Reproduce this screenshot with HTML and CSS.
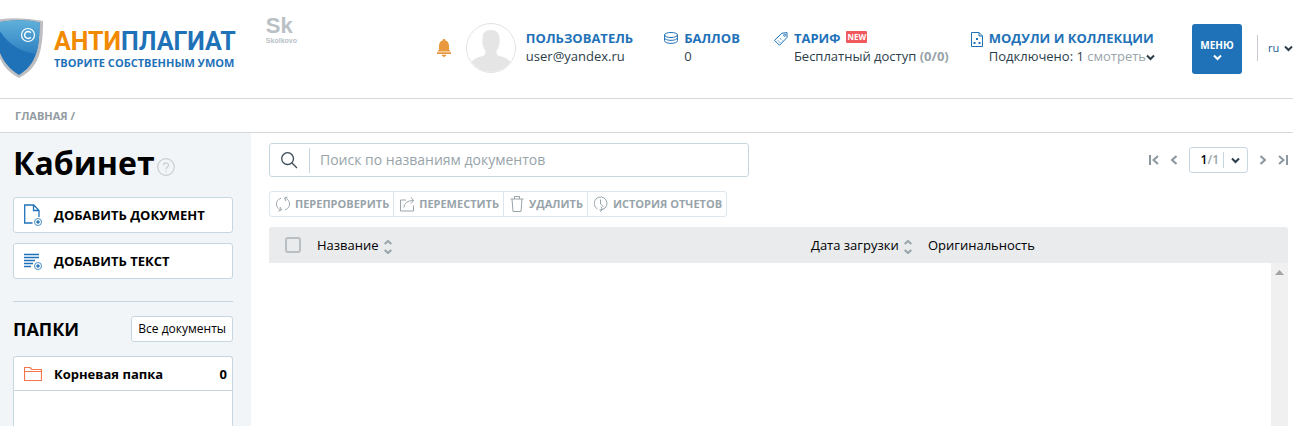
FILE: index.html
```html
<!DOCTYPE html>
<html lang="ru">
<head>
<meta charset="utf-8">
<meta name="viewport" content="width=device-width, initial-scale=1">
<title>Антиплагиат — Кабинет</title>
<link rel="stylesheet" href="styles.css">
</head>
<body>
<header class="header">
  <a class="logo" href="#">
    <svg class="logo-shield" width="44" height="62" viewBox="0 0 44 62" aria-hidden="true">
      <defs>
        <linearGradient id="shine" x1="0" y1="0" x2="0" y2="1"><stop offset="0" stop-color="#66b5de"/><stop offset="1" stop-color="#2b7fc0"/></linearGradient>
        <clipPath id="shield"><path d="M-5 6Q19 1 39.500 5.500C39.500 30 37 47 19 58C4 49-5 34-5 6z"/></clipPath>
      </defs>
      <path d="M-6 3Q19-1 43 4C43 33 39 51 19 61C2 52-6 38-6 3z" fill="#bcbec1"/>
      <path d="M-5 6Q19 1 39.500 5.500C39.500 30 37 47 19 58C4 49-5 34-5 6z" fill="#1f72b8"/>
      <path d="M-5 0H44V38Q14 37-1 13z" fill="url(#shine)" clip-path="url(#shield)"/>
      <circle cx="28" cy="18" r="6.500" fill="none" stroke="#fff" stroke-width="1.200"/>
      <path d="M30.800 15.800a3.500 3.500 0 1 0 0 4.400" fill="none" stroke="#fff" stroke-width="1.400"/>
    </svg>
    <span class="logo-text">
      <span class="logo-name"><span class="logo-accent">АНТИ</span>ПЛАГИАТ</span>
      <span class="logo-tagline">ТВОРИТЕ СОБСТВЕННЫМ УМОМ</span>
    </span>
  </a>
  <a class="partner" href="#"><span class="partner-mark">Sk</span><span class="partner-name">Skolkovo</span></a>

  <div class="account">
    <button class="bell" aria-label="Уведомления">
      <svg width="14" height="18" viewBox="0 0 14 18"><path d="M7 0c1 0 1.500.7 1.500 1.500C11 2.300 12 4.500 12 7v3.500l1.500 2H.5l1.500-2V7c0-2.500 1-4.700 3.500-5.500C5.500.700 6 0 7 0zM0 13.200h14v1.800H0zM4.500 15.800h5Q9.500 17 7.800 17.200V18H6.200v-.8Q4.500 17 4.500 15.800z" fill="#e8993e"/></svg>
    </button>
    <svg class="avatar" width="50" height="50" viewBox="0 0 50 50" aria-hidden="true">
      <circle cx="25" cy="25" r="24.500" fill="#fff" stroke="#e2e2e2"/>
      <path d="M25 7c5.500 0 8.500 3 8.500 8 0 3 .5 4-.3 6.500-.7 4-2 5-2.700 6.500 0 4 1 4.500 5 5.500 5 1.500 7 3 9 5.500A24 24 0 0 1 5.500 39c2-2.500 4-4 9-5.500 4-1 5-1.500 5-5.500-.7-1.500-2-2.500-2.700-6.500-.8-2.500-.3-3.500-.3-6.500 0-5 3-8 8.500-8z" fill="#e5e5e5"/>
    </svg>
    <div class="info info-user">
      <a class="info-title" href="#">ПОЛЬЗОВАТЕЛЬ</a>
      <span>user@yandex.ru</span>
    </div>
    <div class="stat stat-points">
      <svg width="14" height="12" viewBox="0 0 14 12" class="line-blue" aria-hidden="true"><ellipse cx="7" cy="3" rx="6.500" ry="2.500"/><path d="M.5 3v2.800C1 9.200 13 9.200 13.500 5.800V3M.5 6v2.700c.5 3.600 12.500 3.600 13 0V6"/></svg>
      <div class="info"><a class="info-title" href="#">БАЛЛОВ</a><span>0</span></div>
    </div>
    <div class="stat stat-tariff">
      <svg width="14" height="14" viewBox="0 0 14 14" class="line-blue" aria-hidden="true"><path d="M.5 8.300 8 1.200 13 .600V5.500L5.500 13.300z"/><circle cx="10.600" cy="3.300" r="1"/><path d="m4 8.500 2.500 2.500M6.200 6.500l2.300 2.300" stroke-dasharray="1.500 1"/></svg>
      <div class="info">
        <span class="title-row"><a class="info-title" href="#">ТАРИФ</a><span class="badge">NEW</span></span>
        <span>Бесплатный доступ <b class="muted">(0/0)</b></span>
      </div>
    </div>
    <div class="stat stat-modules">
      <svg width="12" height="15" viewBox="0 0 12 15" class="line-blue" aria-hidden="true"><path d="M.5.500H8L11.500 4v10.500H.5zM8 .500V4h3.500"/><path d="M5 6h2v2H5zM2.500 10h2v2h-2zM7.500 10h2v2h-2z" fill="#1f72b8" stroke="none"/></svg>
      <div class="info">
        <a class="info-title" href="#">МОДУЛИ И КОЛЛЕКЦИИ</a>
        <span>Подключено: 1 <a class="muted" href="#">смотреть<svg width="9" height="7" viewBox="0 0 9 7" class="chevron"><path d="m1 1.500 3.500 3.500L8 1.500"/></svg></a></span>
      </div>
    </div>
    <button class="menu">МЕНЮ<svg width="9" height="7" viewBox="0 0 9 7" class="chevron chevron-white"><path d="m1 1.500 3.500 3.500L8 1.500"/></svg></button>
    <label class="lang">
      <select aria-label="Язык"><option>ru</option></select>
      <svg width="9" height="7" viewBox="0 0 9 7" class="chevron"><path d="m1 1.500 3.500 3.500L8 1.500"/></svg>
    </label>
  </div>
</header>

<nav class="breadcrumbs"><a href="#">ГЛАВНАЯ</a> <span>/</span></nav>

<div class="layout">
  <aside class="sidebar">
    <h1 class="page-title">Кабинет
      <svg width="18" height="18" viewBox="0 0 18 18" role="img" aria-label="Справка"><g fill="none" stroke="#c9cdcf" stroke-width="1.200"><circle cx="9" cy="9" r="8.300"/><path d="M6.600 7.200c0-3.200 4.900-3.200 4.900 0C11.500 9 9 9 9 11.200M9 12.400v1.400"/></g></svg>
    </h1>
    <div class="actions">
      <button class="action">
        <svg width="18" height="22" viewBox="0 0 18 22" class="line-blue"><path d="M8.500 19H.7V1h9l5.300 5.500v6.500M9.500 1V6.500H15" stroke-width="1.300"/><circle cx="14" cy="18" r="3.500" stroke-width=".8"/><path d="M14 16.200v3.600M12.200 18h3.600" stroke-width="1.500"/></svg>
        ДОБАВИТЬ ДОКУМЕНТ
      </button>
      <button class="action">
        <svg width="18" height="18" viewBox="0 0 18 18" class="line-blue"><path d="M0 2.500h15M0 5.500h15M0 8.500h11M0 11.500h9M0 14.500h7" stroke-width="1.500"/><circle cx="14" cy="14" r="3.500" stroke-width=".8"/><path d="M14 12.200v3.600M12.200 14h3.600" stroke-width="1.500"/></svg>
        ДОБАВИТЬ ТЕКСТ
      </button>
    </div>
    <div class="folders-head">
      <h2>ПАПКИ</h2>
      <button class="all-docs">Все документы</button>
    </div>
    <div class="folders">
      <a class="folder" href="#">
        <svg width="18" height="14" viewBox="0 0 18 14" aria-hidden="true"><path d="M.500 13.500V.500H6l2 2h9.500v11zM.500 4.500h17" fill="none" stroke="#f3764c" stroke-width="1.200"/></svg>
        <span class="folder-name">Корневая папка</span><span>0</span>
      </a>
    </div>
  </aside>

  <main class="content">
    <div class="search-row">
      <form class="search">
        <button type="button" aria-label="Найти"><svg width="17" height="17" viewBox="0 0 17 17"><path d="m11 11 5 5M12.500 6.600a5.900 5.900 0 1 1-11.800 0 5.900 5.900 0 0 1 11.800 0z" fill="none" stroke="#3a4a56" stroke-width="1.300"/></svg></button>
        <input type="text" placeholder="Поиск по названиям документов" aria-label="Поиск по названиям документов">
      </form>
      <nav class="pager" aria-label="Страницы">
        <button aria-label="Первая"><svg width="10" height="10" viewBox="0 0 10 10"><path d="M1 0v10M9 1 4.500 5 9 9"/></svg></button>
        <button aria-label="Предыдущая"><svg width="6" height="10" viewBox="0 0 6 10"><path d="M5.500 1 1 5l4.500 4"/></svg></button>
        <button class="page-select" aria-label="Страница 1 из 1"><span>1<span class="muted">/1</span></span><span class="page-arrow"><svg width="9" height="7" viewBox="0 0 9 7" class="chevron"><path d="m1 1.500 3.500 3.500L8 1.500"/></svg></span></button>
        <button aria-label="Следующая"><svg width="6" height="10" viewBox="0 0 6 10"><path d="M.500 1 5 5 .500 9"/></svg></button>
        <button aria-label="Последняя"><svg width="10" height="10" viewBox="0 0 10 10"><path d="M9 0v10M1 1l4.500 4L1 9"/></svg></button>
      </nav>
    </div>

    <div class="toolbar">
      <button><svg width="14" height="16" viewBox="0 0 14 16"><path d="M5 2.200C1 3.500-.5 7 1 10.500c.7 1.700 2 2.700 3.500 3.200M2.500 15l3-1-1.500-3M9 13.800c4-1.300 5.500-4.800 4-8.300-.7-1.700-2-2.700-3.500-3.200M11.500 1l-3 1L10 5"/></svg>ПЕРЕПРОВЕРИТЬ</button>
      <button><svg width="14" height="15" viewBox="0 0 14 15"><path d="M6 3H.500v11h13V8.500M4 10.500C4 6 8 3.500 13.500 3.500M11 .500l2.500 3-2.500 3"/></svg>ПЕРЕМЕСТИТЬ</button>
      <button><svg width="14" height="16" viewBox="0 0 14 16"><path d="M.5 3h13M2 3 3 15.500h8L12 3M4.500 3V.500h5V3"/></svg>УДАЛИТЬ</button>
      <button><svg width="14" height="16" viewBox="0 0 14 16"><path d="M3.500 13A6.400 6.400 0 1 1 8.500 13.500L5.500 13.800M7 10.800l1.500 2.700L6 15.700M6.500 3.500V8L9.500 10.500"/></svg>ИСТОРИЯ ОТЧЕТОВ</button>
    </div>

    <table class="docs">
      <thead>
        <tr>
          <th class="col-check"><input type="checkbox" aria-label="Выбрать все"></th>
          <th>Название<svg class="sort" width="8" height="14" viewBox="0 0 8 14"><path d="m.7 4 3.300-3L7.300 4M.7 10l3.300 3 3.300-3"/></svg></th>
          <th class="col-date">Дата загрузки<svg class="sort" width="8" height="14" viewBox="0 0 8 14"><path d="m.7 4 3.300-3L7.300 4M.7 10l3.300 3 3.300-3"/></svg></th>
          <th class="col-orig">Оригинальность</th>
        </tr>
      </thead>
    </table>
    <div class="docs-body"><div class="scroll-track"><svg width="9" height="5" viewBox="0 0 9 5"><path d="M4.500 0 9 5H0z" fill="#a3a3a3"/></svg></div></div>
  </main>
</div>
</body>
</html>
```

FILE: styles.css
```css
* { box-sizing: border-box; }

body {
  margin: 0;
  min-height: 100vh;
  display: flex;
  flex-direction: column;
  background: #fff;
  color: #000;
  font: 13px/18px "Open Sans", "Noto Sans", sans-serif;
}

svg { display: block; flex: none; }
a { color: inherit; text-decoration: none; }
button {
  padding: 0;
  border: 0;
  background: none;
  color: inherit;
  font: inherit;
  cursor: pointer;
}

.line-blue { fill: none; stroke: #1f72b8; }
.chevron { fill: none; stroke: #2d3e4b; stroke-width: 2; }
.chevron-white { stroke: #fff; }
.muted { color: #98a4aa; }

/* Header */
.header {
  display: flex;
  align-items: flex-start;
  border-bottom: 1px solid #d5d8da;
  padding-bottom: 19px;
  color: #2d3e4b;
}
.logo { display: flex; gap: 10px; padding-top: 17px; }
.logo-text { display: flex; flex-direction: column; padding-top: 10px; color: #1f72b8; white-space: nowrap; }
.logo-name { font: bold 25px/30px Roboto, sans-serif; }
.logo-accent { color: #f18a00; }
.logo-tagline { font-size: 11px; font-weight: 700; line-height: 12px; }
.partner { display: flex; flex-direction: column; gap: 1px; margin: 16px 0 0 30px; color: #b9c0c6; font-family: "Liberation Sans", sans-serif; }
.partner-mark { font-size: 22px; font-weight: 700; line-height: 20px; }
.partner-name { font-size: 7px; font-weight: 700; line-height: 8px; }

.account { display: flex; align-items: flex-start; margin-left: auto; padding-top: 23px; white-space: nowrap; }
.bell { padding-top: 16px; margin-right: 15px; }
.avatar { margin-right: 10px; }
.info { display: flex; flex-direction: column; padding-top: 6px; }
.info-title { color: #1f72b8; font-weight: 700; }
.title-row { display: flex; gap: 6px; }
.badge {
  align-self: flex-start;
  margin-top: 2px;
  padding: 0 1px;
  border-radius: 1px;
  background: #f05a5e;
  color: #fff;
  font-size: 8px;
  font-weight: 700;
  line-height: 12px;
}
.stat { display: flex; gap: 6px; }
.stat > svg { margin-top: 9px; }
.stat-points { margin-left: 31px; }
.stat-tariff { margin-left: 34px; }
.stat-modules { margin-left: 22px; }
.stat a .chevron { display: inline-block; }
.menu {
  display: flex;
  flex-direction: column;
  align-items: center;
  justify-content: center;
  gap: 2px;
  width: 50px;
  height: 50px;
  margin: 1px 15px 0 37px;
  border-radius: 3px;
  background: #1f72b8;
  color: #fff;
  font-size: 10px;
  font-weight: 700;
  line-height: 14px;
}
.lang {
  display: flex;
  align-items: center;
  gap: 4px;
  height: 26px;
  margin-top: 12px;
  padding-left: 10px;
  border-left: 1px solid #c5cbd0;
}
.lang select {
  appearance: none;
  padding: 0;
  border: 0;
  background: none;
  color: #1c5a92;
  font: 11px/16px "Open Sans", sans-serif;
}

/* Breadcrumbs */
.breadcrumbs {
  padding: 8px 15px 7px;
  border-bottom: 1px solid #d5d8da;
  color: #929b9f;
  font-size: 11px;
  font-weight: 700;
}

.layout { flex: 1; display: grid; grid-template-columns: 251px minmax(0, 1fr); }

/* Sidebar */
.sidebar { display: flex; flex-direction: column; padding: 10px 18px 0 13px; background: #f1f5f8; }
.page-title { display: flex; align-items: center; gap: 2px; margin: 0 0 14px; font-size: 32px; line-height: 40px; }
.page-title svg { margin-top: 8px; }
.actions { display: grid; gap: 10px; padding-bottom: 22px; border-bottom: 1px solid #c7d7e2; }
.action {
  display: flex;
  align-items: center;
  gap: 12px;
  height: 36px;
  padding: 0 10px;
  border: 1px solid #c7d7e2;
  border-radius: 3px;
  background: #fff;
  font-weight: 700;
}
.folders-head { display: flex; align-items: center; justify-content: space-between; margin: 14px 0; }
.folders-head h2 { margin: 0; font-size: 18px; font-weight: 700; line-height: 26px; }
.all-docs { height: 26px; padding: 0 6px; border: 1px solid #c7d7e2; border-radius: 3px; background: #fff; font-size: 12px; }
.folders { flex: 1; border: 1px solid #c7d7e2; border-bottom: 0; border-radius: 3px 3px 0 0; background: #fff; }
.folder { display: flex; align-items: center; gap: 12px; height: 34px; padding: 0 5px 0 10px; border-bottom: 1px solid #c7d7e2; font-weight: 700; }
.folder-name { flex: 1; }

/* Content */
.content { display: flex; flex-direction: column; padding: 10px 5px 0 18px; }
.search-row { display: flex; align-items: center; justify-content: space-between; gap: 20px; }
.search { display: flex; align-items: center; flex: 0 1 480px; height: 34px; border: 1px solid #c7d7e2; border-radius: 3px; }
.search button { padding: 4px 11px; border-right: 1px solid #c7d7e2; }
.search input { flex: 1; min-width: 0; padding: 0 10px; border: 0; background: none; font: 14px/20px "Open Sans", sans-serif; }
.search input::placeholder { color: #98a4aa; opacity: 1; }
.pager { display: flex; align-items: center; gap: 12px; }
.pager svg { fill: none; stroke: #8b989f; stroke-width: 2; }
.pager .chevron { stroke: #2d3e4b; stroke-width: 2; }
.page-select { display: flex; align-items: center; height: 26px; padding: 0 7px 0 11px; border: 1px solid #c7d7e2; border-radius: 3px; font-size: 12px; font-weight: 600; }
.page-arrow { display: flex; align-items: center; height: 16px; margin-left: 4px; padding-left: 7px; border-left: 1px solid #c7d7e2; }

.toolbar { display: flex; align-self: flex-start; margin: 14px 0 10px; border: 1px solid #dde6ec; border-radius: 3px; }
.toolbar button { display: flex; align-items: center; gap: 5px; height: 24px; padding: 0 4px 0 6px; color: #98a4aa; font-size: 11px; font-weight: 700; }
.toolbar button + button { border-left: 1px solid #dde6ec; }
.toolbar svg { fill: none; stroke: #98a4aa; }

.docs { width: 100%; border-spacing: 0; table-layout: fixed; background: #e9ebed; border-radius: 3px 3px 0 0; }
.docs th { height: 36px; padding: 0; font-weight: 400; text-align: left; }
.docs .col-check { width: 48px; padding-left: 16px; }
.docs .col-date { width: 117px; }
.docs .col-orig { width: 360px; }
.docs input { display: block; appearance: none; width: 16px; height: 16px; margin: 0; border: 2px solid #babfc3; border-radius: 3px; }
.sort { display: inline-block; margin-left: 5px; vertical-align: -4px; fill: none; stroke: #98a4aa; stroke-width: 2; }
.docs-body { flex: 1; display: flex; justify-content: flex-end; }
.scroll-track { display: flex; justify-content: center; width: 17px; padding-top: 7px; background: #f0f0f0; }
```
